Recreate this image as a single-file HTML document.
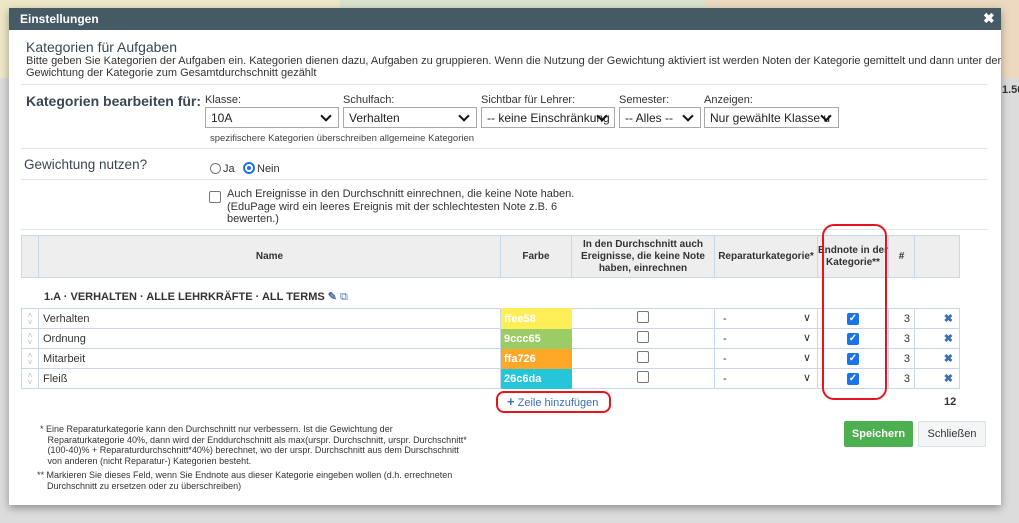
<!DOCTYPE html>
<html><head><meta charset="utf-8"><style>
*{box-sizing:border-box;margin:0;padding:0}
body{width:1019px;height:523px;overflow:hidden;background:#dcdcdc;font-family:"Liberation Sans",Arial,sans-serif;color:#333;position:relative}
.a{position:absolute;white-space:nowrap}
.sel{position:absolute;height:21px;border:1px solid #a9a9a9;background:#fff;font-size:12px;padding:3px 0 0 5px;color:#222}
.sel:after{content:"";position:absolute;right:8px;top:4px;width:6px;height:6px;border-right:2px solid #111;border-bottom:2px solid #111;transform:rotate(45deg)}
.hr{position:absolute;left:21px;width:967px;height:1px;background:#e6e6e6}
.lbl{position:absolute;font-size:11px;color:#333}
table{position:absolute;border-collapse:collapse;font-size:11px}
td,th{border:1px solid #c8d8e8}
th{background:#eee;font-weight:bold;font-size:10px;color:#333;text-align:center;line-height:12px}
.cb{display:inline-block;width:12px;height:12px;border:1px solid #777;border-radius:2px;background:#fff}
.cbc{display:inline-block;width:12px;height:12px;border-radius:2px;background:#1a73e8;color:#fff;font-size:10px;line-height:12px;text-align:center;font-weight:bold}
</style></head><body>
<div class="a" style="left:0;top:0;width:340px;height:78px;background:#ede7c7"></div>
<div class="a" style="left:340px;top:0;width:365px;height:78px;background:#d8e2cc"></div>
<div class="a" style="left:705px;top:0;width:314px;height:78px;background:#ecd9bf"></div>
<div class="a" style="left:1002px;top:84px;font-size:11px;font-weight:bold;color:#333">1.50</div>

<div class="a" style="left:9px;top:8px;width:992px;height:497px;background:#fff;box-shadow:0 3px 8px rgba(0,0,0,.35)"></div>
<div class="a" style="left:9px;top:8px;width:992px;height:22px;background:#465a66"></div>
<div class="a" style="left:20px;top:12px;font-size:12px;font-weight:bold;color:#fff">Einstellungen</div>
<div class="a" style="left:983px;top:10px;font-size:14px;font-weight:bold;color:#fff">✖</div>

<div class="a" style="left:26px;top:39px;font-size:14px;color:#3a4652">Kategorien für Aufgaben</div>
<div class="a" style="left:26px;top:55px;font-size:11px;color:#333;line-height:12px">Bitte geben Sie Kategorien der Aufgaben ein. Kategorien dienen dazu, Aufgaben zu gruppieren. Wenn die Nutzung der Gewichtung aktiviert ist werden Noten der Kategorie gemittelt und dann unter der<br>Gewichtung der Kategorie zum Gesamtdurchschnitt gezählt</div>
<div class="hr" style="top:84px"></div>

<div class="a" style="left:26px;top:93px;font-size:14px;font-weight:bold;color:#3a4652">Kategorien bearbeiten für:</div>
<div class="lbl" style="left:205px;top:94px">Klasse:</div>
<div class="lbl" style="left:343px;top:94px">Schulfach:</div>
<div class="lbl" style="left:481px;top:94px">Sichtbar für Lehrer:</div>
<div class="lbl" style="left:619px;top:94px">Semester:</div>
<div class="lbl" style="left:704px;top:94px">Anzeigen:</div>
<div class="sel" style="left:205px;top:107px;width:134px">10A</div>
<div class="sel" style="left:343px;top:107px;width:134px">Verhalten</div>
<div class="sel" style="left:481px;top:107px;width:134px;overflow:hidden">-- keine Einschränkung</div>
<div class="sel" style="left:619px;top:107px;width:82px">-- Alles --</div>
<div class="sel" style="left:704px;top:107px;width:135px;overflow:hidden">Nur gewählte Klasse u</div>
<div class="a" style="left:210px;top:133px;font-size:9.5px;color:#444">spezifischere Kategorien überschreiben allgemeine Kategorien</div>
<div class="hr" style="top:148px"></div>

<div class="a" style="left:24px;top:157px;font-size:13.5px;color:#3a4652">Gewichtung nutzen?</div>
<div class="a" style="left:210px;top:163px;width:11px;height:11px;border:1px solid #777;border-radius:50%"></div>
<div class="a" style="left:223px;top:163px;font-size:11px">Ja</div>
<div class="a" style="left:243px;top:162px;width:12px;height:12px;border:2px solid #1a73e8;border-radius:50%"><div style="margin:2px;width:4px;height:4px;border-radius:50%;background:#1a73e8"></div></div>
<div class="a" style="left:257px;top:163px;font-size:11px">Nein</div>
<div class="hr" style="top:179px"></div>

<div class="a cb" style="left:209px;top:191px"></div>
<div class="a" style="left:227px;top:188px;font-size:11px;line-height:12.5px">Auch Ereignisse in den Durchschnitt einrechnen, die keine Note haben.<br>(EduPage wird ein leeres Ereignis mit der schlechtesten Note z.B. 6<br>bewerten.)</div>
<div class="hr" style="top:229px"></div>

<table style="left:21px;top:235px;width:939px">
<tr style="height:42px"><th style="width:17px"></th><th style="width:462px">Name</th><th style="width:71px">Farbe</th><th style="width:143px">In den Durchschnitt auch Ereignisse, die keine Note haben, einrechnen</th><th style="width:103px">Reparaturkategorie*</th><th style="width:71px">Endnote in der Kategorie**</th><th style="width:26px">#</th><th style="width:45px"></th></tr>
</table>
<div class="a" style="left:44px;top:290px;font-size:11px;font-weight:bold;color:#333">1.A · VERHALTEN · ALLE LEHRKRÄFTE · ALL TERMS <span style="color:#4a6da0">✎</span> <span style="color:#4a7ab8;font-weight:normal">⧉</span></div>

<table style="left:21px;top:308px;width:939px">
<tr style="height:20px"><td style="width:17px;color:#bbb;font-size:8px;text-align:center;line-height:7px">˄<br>˅</td><td style="width:462px;padding-left:4px">Verhalten</td><td style="width:71px;background:#ffee58;color:#fff;font-weight:bold;padding-left:3px;border-color:#ffee58">ffee58</td><td style="width:143px;text-align:center"><span class="cb"></span></td><td style="width:103px;padding-left:8px;position:relative">-<span style="position:absolute;right:6px;top:2px;font-size:11px">&#x2228;</span></td><td style="width:71px;text-align:center"><span class="cbc">✓</span></td><td style="width:26px;text-align:right;padding-right:4px">3</td><td style="width:45px;text-align:right;padding-right:6px;color:#3c6fb0;font-weight:bold">✖</td></tr>
<tr style="height:20px"><td style="color:#bbb;font-size:8px;text-align:center;line-height:7px">˄<br>˅</td><td style="padding-left:4px">Ordnung</td><td style="background:#9ccc65;color:#fff;font-weight:bold;padding-left:3px;border-color:#9ccc65">9ccc65</td><td style="text-align:center"><span class="cb"></span></td><td style="padding-left:8px;position:relative">-<span style="position:absolute;right:6px;top:2px">&#x2228;</span></td><td style="text-align:center"><span class="cbc">✓</span></td><td style="text-align:right;padding-right:4px">3</td><td style="text-align:right;padding-right:6px;color:#3c6fb0;font-weight:bold">✖</td></tr>
<tr style="height:20px"><td style="color:#bbb;font-size:8px;text-align:center;line-height:7px">˄<br>˅</td><td style="padding-left:4px">Mitarbeit</td><td style="background:#ffa726;color:#fff;font-weight:bold;padding-left:3px;border-color:#ffa726">ffa726</td><td style="text-align:center"><span class="cb"></span></td><td style="padding-left:8px;position:relative">-<span style="position:absolute;right:6px;top:2px">&#x2228;</span></td><td style="text-align:center"><span class="cbc">✓</span></td><td style="text-align:right;padding-right:4px">3</td><td style="text-align:right;padding-right:6px;color:#3c6fb0;font-weight:bold">✖</td></tr>
<tr style="height:20px"><td style="color:#bbb;font-size:8px;text-align:center;line-height:7px">˄<br>˅</td><td style="padding-left:4px">Fleiß</td><td style="background:#26c6da;color:#fff;font-weight:bold;padding-left:3px;border-color:#26c6da">26c6da</td><td style="text-align:center"><span class="cb"></span></td><td style="padding-left:8px;position:relative">-<span style="position:absolute;right:6px;top:2px">&#x2228;</span></td><td style="text-align:center"><span class="cbc">✓</span></td><td style="text-align:right;padding-right:4px">3</td><td style="text-align:right;padding-right:6px;color:#3c6fb0;font-weight:bold">✖</td></tr>
</table>

<div class="a" style="left:507px;top:394px;font-size:11px;color:#3c6fb0"><b style="font-size:13px">+</b> Zeile hinzufügen</div>
<div class="a" style="left:944px;top:396px;font-size:11px;font-weight:bold">12</div>

<div class="a" style="left:822px;top:224px;width:65px;height:176px;border:2px solid #e8141c;border-radius:12px"></div>
<div class="a" style="left:496px;top:391px;width:115px;height:22px;border:2px solid #e8141c;border-radius:8px"></div>

<div class="a" style="left:40px;top:424px;font-size:9px;line-height:10.5px;color:#333">* Eine Reparaturkategorie kann den Durchschnitt nur verbessern. Ist die Gewichtung der<br>&nbsp;&nbsp;&nbsp;Reparaturkategorie 40%, dann wird der Enddurchschnitt als max(urspr. Durchschnitt, urspr. Durchschnitt*<br>&nbsp;&nbsp;&nbsp;(100-40)% + Reparaturdurchschnitt*40%) berechnet, wo der urspr. Durchschnitt aus dem Durschschnitt<br>&nbsp;&nbsp;&nbsp;von anderen (nicht Reparatur-) Kategorien besteht.</div>
<div class="a" style="left:37px;top:470px;font-size:9px;line-height:10.5px;color:#333">** Markieren Sie dieses Feld, wenn Sie Endnote aus dieser Kategorie eingeben wollen (d.h. errechneten<br>&nbsp;&nbsp;&nbsp;&nbsp;Durchschnitt zu ersetzen oder zu überschreiben)</div>

<div class="a" style="left:844px;top:421px;width:69px;height:26px;background:#4caf50;border-radius:2px;color:#fff;font-size:11px;font-weight:bold;text-align:center;line-height:26px">Speichern</div>
<div class="a" style="left:918px;top:421px;width:68px;height:26px;background:#f4f5f7;border:1px solid #ddd;border-radius:2px;color:#333;font-size:11px;text-align:center;line-height:24px">Schließen</div>
</body></html>
